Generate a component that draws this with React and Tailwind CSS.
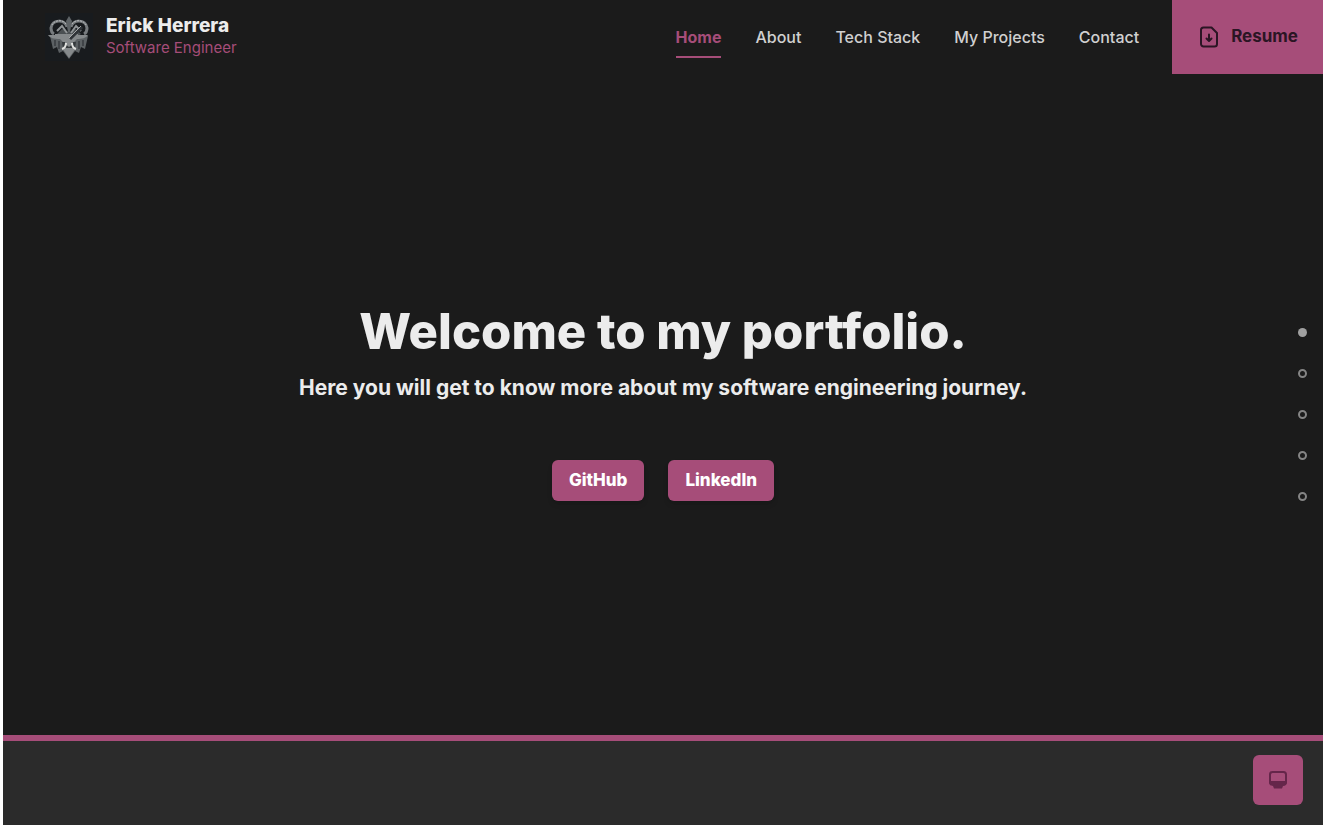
const links = ["Home", "About", "Tech Stack", "My Projects", "Contact"];

function Emblem() {
  return (
    <svg viewBox="0 0 48 48" className="h-12 w-12 shrink-0" aria-hidden="true">
      <rect width="48" height="48" fill="#181b1e" />
      <path d="M5 23h38l-3 13-4-2-2 6-4-2-6 8-6-8-4 2-2-6-4 2z" fill="#5c6164" />
      <path d="M17 35h14l-7 10z" fill="#85898b" />
      <path d="M12 21l5-5 7 3 7-3 5 5-5 3H17z" fill="#4b5053" />
      <path d="M22 14c-2-8-15-8-16 1 0 3 1 5 3 6M26 14c2-8 15-8 16 1 0 3-1 5-3 6" fill="none" stroke="#777b7e" strokeWidth="3" />
      <path d="M21 11c-3-5-12-4-14 1M27 11c3-5 12-4 14 1" fill="none" stroke="#b5b8b9" strokeWidth="1" strokeDasharray="2 1" />
      <path d="M12 18l5-5 5 7M36 18l-5-5-5 7" fill="none" stroke="#909496" strokeWidth="2" />
      <path d="M24 3l3 5-2 11h-2l-2-11z" fill="#5e6366" />
      <path d="M3 22h7v-1h23v1h10c-2 3-6 4-11 4l-3 3H18l-3-3C9 26 5 25 3 22z" fill="#85898b" />
      <path d="M25 26l12-12" stroke="#303438" strokeWidth="3" />
      <path d="M24 25l12-12" stroke="#a4a7a8" strokeWidth="1" />
      <path d="M17 29h14l-1 6H18z" fill="#34393c" />
      <path d="M20 29h8v2l-4 3-4-3z" fill="#85898b" />
      <path d="M21 30c0 3-1 5-4 6M27 30c0 3 1 5 4 6" fill="none" stroke="#e0e1df" strokeWidth="2" />
      <path d="M10 27v6M14 28v8M34 28v8M38 27v6" stroke="#24292c" strokeWidth="1" />
    </svg>
  );
}

function FileDownIcon() {
  return (
    <svg viewBox="0 0 24 24" className="size-6 shrink-0" fill="none" stroke="currentColor" strokeWidth="2" strokeLinecap="round" strokeLinejoin="round" aria-hidden="true">
      <path d="M14.500 2.500h-8a2.500 2.500 0 0 0-2.500 2.500v14a2.500 2.500 0 0 0 2.500 2.500h11a2.500 2.500 0 0 0 2.500-2.500V8z" />
      <path d="M12 9.500v6M9.500 13.500l2.500 2.500 2.500-2.500" />
    </svg>
  );
}

function MonitorIcon() {
  return (
    <svg viewBox="0 0 20 20" className="size-5" aria-hidden="true">
      <rect x="2" y="2" width="16" height="12" rx="2.500" fill="none" stroke="currentColor" strokeWidth="2" />
      <path d="M1 11h18v1c0 2.500-1.500 4-4 4l-1 2.500H6L5 16c-2.500 0-4-1.500-4-4z" fill="currentColor" />
    </svg>
  );
}

export default function App() {
  return (
    <div className="min-h-screen bg-white px-[3px] font-['Inter',sans-serif]">
      <div className="flex min-h-screen flex-col bg-[#1b1b1b] text-[#ececec]">
        <header className="flex h-[74px] items-stretch justify-between">
          <a href="#home" className="flex items-center gap-[13px] pl-[42px]">
            <Emblem />
            <span className="flex flex-col pb-[2px]">
              <span className="text-[19px] leading-6 font-extrabold">Erick Herrera</span>
              <span className="text-[15px] leading-5 text-[#a64d79]">Software Engineer</span>
            </span>
          </a>
          <div className="flex items-stretch gap-[33px]">
            <nav className="flex items-center gap-[34px] text-base font-medium text-[#d0d0d0]">
              {links.map((label, i) => (
                <a
                  key={label}
                  href={"#" + label.toLowerCase().replace(" ", "-")}
                  className={
                    i === 0
                      ? "border-y-2 border-b-[#a64d79] border-t-transparent py-[7px] font-bold text-[#a64d79]"
                      : "py-[7px]"
                  }
                >
                  {label}
                </a>
              ))}
            </nav>
            <a href="#resume" className="flex items-center gap-[10px] bg-[#a64d79] px-[25px] text-[17px] font-bold text-[#2b1524]">
              <FileDownIcon />
              Resume
            </a>
          </div>
        </header>

        <main className="flex flex-1 flex-col items-center justify-center px-4 text-center">
          <h1 className="text-[49px] leading-[48px] font-extrabold">Welcome to my portfolio.</h1>
          <p className="mt-[18px] text-[21px] leading-7 font-bold">
            Here you will get to know more about my software engineering journey.
          </p>
          <div className="mt-[58px] flex gap-6">
            <button type="button" className="h-[41px] rounded-md bg-[#a64d79] px-[17px] text-[17px] font-extrabold text-white shadow-md">GitHub</button>
            <button type="button" className="h-[41px] rounded-md bg-[#a64d79] px-[17px] text-[17px] font-extrabold text-white shadow-md">LinkedIn</button>
          </div>
        </main>

        <footer className="flex justify-end border-t-6 border-[#a64d79] bg-[#2b2b2b] px-5 pt-[14px] pb-5">
          <button type="button" aria-label="Display mode" className="grid size-[50px] place-items-center rounded-md bg-[#a64d79] text-[#65264a]">
            <MonitorIcon />
          </button>
        </footer>
      </div>

      <div className="fixed inset-y-0 right-[19px] flex flex-col justify-center gap-8 pt-1">
        {links.map((label, i) => (
          <a
            key={label}
            href={"#" + label.toLowerCase().replace(" ", "-")}
            aria-label={label}
            className={
              i === 0
                ? "size-[9px] rounded-full bg-[#a0a0a0]"
                : "size-[9px] rounded-full border-2 border-[#858585]"
            }
          />
        ))}
      </div>
    </div>
  );
}
